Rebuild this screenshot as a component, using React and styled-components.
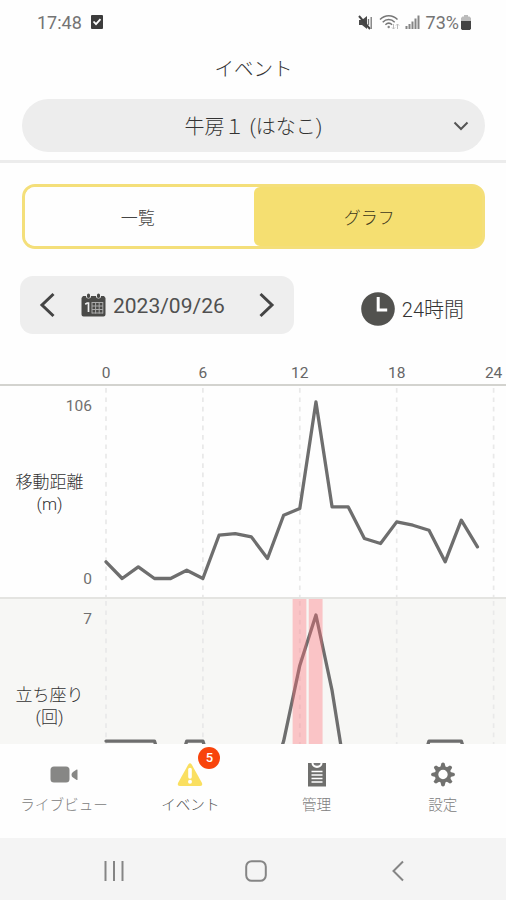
import React from 'react'
import styled, { createGlobalStyle } from 'styled-components'

const GlobalStyle = createGlobalStyle`
  * {
    box-sizing: border-box;
  }
  body {
    margin: 0;
    background: #fefefe;
    font-family: Roboto, 'Noto Sans CJK JP', sans-serif;
    font-weight: 300;
    color: #333;
  }
  svg {
    display: block;
    flex: none;
  }
`

const Screen = styled.div`
  display: flex;
  flex-direction: column;
  width: 506px;
  height: 900px;
  overflow: hidden;
  background: #fefefe;
`

const StatusBar = styled.div`
  display: flex;
  align-items: center;
  height: 44px;
  padding: 0 35px 0 37px;
  font-size: 18px;
  font-weight: 400;
  color: #747474;
`
const StatusLeft = styled.div`
  display: flex;
  align-items: center;
  gap: 9px;
`
const StatusRight = styled.div`
  display: flex;
  align-items: center;
  margin-left: auto;
  gap: 5.5px;
`
const Battery = styled.span`
  display: flex;
  align-items: center;
  gap: 2px;
`

const Header = styled.header`
  height: 119px;
  padding: 0 21px 0 22px;
  border-bottom: 3px solid #ececec;
`
const Title = styled.h1`
  height: 48px;
  margin: 0 0 7px;
  font-size: 19.5px;
  font-weight: inherit;
  line-height: 51px;
  text-align: center;
`
const Select = styled.button`
  display: grid;
  grid-template-columns: 40px 1fr 40px;
  align-items: center;
  width: 100%;
  height: 53px;
  padding: 0;
  border: 0;
  border-radius: 27px;
  background: #ededed;
  font: inherit;
  font-size: 20px;
  color: #333;
`
const SelectLabel = styled.span`
  grid-column: 2;
`
const SelectArrow = styled.span`
  padding-left: 8px;
`

const Tabs = styled.div`
  display: flex;
  height: 65px;
  margin: 21px 21px 0 22px;
  border: 3px solid #f4df7a;
  border-radius: 13px;
  background: linear-gradient(90deg, #fefefe 60%, #f5df71 60%);
`
const Tab = styled.button`
  flex: 1;
  padding: ${({ $active }) => ($active ? '0 0 0 3px' : '0 3px 0 0')};
  border: 0;
  border-radius: ${({ $active }) => ($active ? '6px 10px 10px 6px' : '10px 0 0 10px')};
  background: ${({ $active }) => ($active ? '#f5df71' : '#fefefe')};
  font: inherit;
  font-size: 17px;
  color: ${({ $active }) => ($active ? '#40391c' : '#444')};
`

const Filter = styled.div`
  display: flex;
  align-items: center;
  height: 58px;
  margin: 27px 42px 0 20px;
`
const DatePicker = styled.div`
  display: flex;
  align-items: center;
  width: 274px;
  height: 58px;
  padding: 0 19px;
  border-radius: 13px;
  background: #eee;
`
const DateText = styled.span`
  margin: 2px auto 0 7px;
  font-size: 21px;
  font-weight: 400;
  color: #505050;
`
const Calendar = styled.span`
  margin-left: 26px;
`
const Range = styled.div`
  display: flex;
  align-items: center;
  gap: 7px;
  margin-left: auto;
  padding-top: 8px;
  font-size: 20px;
`
const RangeLabel = styled.span`
  padding-top: 3px;
  line-height: 31px;
`

const Axis = styled.div`
  display: flex;
  align-items: flex-end;
  height: 52px;
  padding: 0 0 2px 57.6px;
  border-bottom: 2px solid #d3d3cf;
  font-size: 15.5px;
  font-weight: 400;
  line-height: 18px;
  color: #666;
`
const Hour = styled.span`
  flex: 0 0 96.9px;
  text-align: center;
`

const Charts = styled.main`
  height: 358px;
  overflow: hidden;
`
const Row = styled.section`
  display: flex;
  height: 213px;
  border-bottom: 2px solid #e4e4e1;
  background: ${({ $shaded }) => ($shaded ? '#f7f7f5' : '#fefefe')};
`
const Legend = styled.div`
  display: flex;
  flex-direction: column;
  justify-content: space-between;
  width: 92px;
  padding: 11px 0 9px 7px;
`
const Bound = styled.span`
  height: 18px;
  font-size: 15.5px;
  font-weight: 400;
  line-height: 18px;
  text-align: right;
  color: #707070;
`
const Metric = styled.span`
  font-size: 17px;
  line-height: 22px;
  text-align: center;
`

const Nav = styled.nav`
  display: flex;
  height: 94px;
  padding: 16px 0 0 1px;
  background: #fefefe;
`
const NavItem = styled.a`
  display: flex;
  flex: 1;
  flex-direction: column;
  align-items: center;
  font-size: 14.6px;
  line-height: 22px;
  color: ${({ $active }) => ($active ? '#555' : '#808080')};
`
const NavIcon = styled.span`
  position: relative;
  height: 33.500px;
`
const Badge = styled.span`
  position: absolute;
  top: -13px;
  left: 21px;
  width: 22px;
  height: 22px;
  border-radius: 50%;
  background: #f8440c;
  font-size: 13px;
  font-weight: 500;
  text-align: center;
  color: #fff;
`

const SystemBar = styled.div`
  display: flex;
  align-items: center;
  height: 62px;
  padding: 3px 0 0 43px;
  background: #f4f4f4;
`
const SystemKey = styled.span`
  display: flex;
  justify-content: center;
  width: 142px;
`

const HOURS = [0, 6, 12, 18, 24]
const STEP = 16.15
const LEFT = 14
const BASE = 192.5
const SPAN = 176.5

const METRICS = [
  {
    name: '移動距離',
    unit: '(m)',
    min: 0,
    max: 106,
    values: [
      10, 0, 7, 0, 0, 5, 0, 26, 27, 25, 12, 38, 42, 106, 43, 43, 24, 21, 34, 32,
      29, 10, 35, 19,
    ],
    alerts: [],
  },
  {
    name: '立ち座り',
    unit: '(回)',
    max: 7,
    values: [
      2, 2, 2, 2, 0, 2, 2, 0, 0, 0, 0, 2, 5, 7, 4, 0, 0, 0, 0, 0, 2, 2, 2, 0,
    ],
    alerts: [12, 13],
  },
]

function Chart({ values, max, alerts }) {
  const points = values
    .map((v, i) => `${LEFT + i * STEP},${BASE - (v / max) * SPAN}`)
    .join(' ')

  return (
    <svg width="414" height="211" viewBox="0 0 414 211">
      {HOURS.map(h => (
        <line
          key={h}
          x1={LEFT + h * STEP}
          x2={LEFT + h * STEP}
          y1="2"
          y2="211"
          stroke="#e9e9e9"
          strokeWidth="1.7"
          strokeDasharray="4.7 4.7"
        />
      ))}
      <polyline
        points={points}
        fill="none"
        stroke="#6e6e6e"
        strokeWidth="3.3"
        strokeLinejoin="round"
        strokeLinecap="round"
      />
      {alerts.map(h => (
        <rect
          key={h}
          x={LEFT + h * STEP - 7.2}
          y="0"
          width="13.8"
          height="211"
          fill="rgba(255, 108, 116, 0.37)"
        />
      ))}
    </svg>
  )
}

function Chevron({ width, height, stroke, color, d }) {
  return (
    <svg width={width} height={height} viewBox={`0 0 ${width} ${height}`}>
      <path d={d} fill="none" stroke={color} strokeWidth={stroke} />
    </svg>
  )
}

function CheckIcon() {
  return (
    <svg width="12" height="14" viewBox="0 0 12 14">
      <rect width="12" height="14" rx="1" fill="#3c3c3c" />
      <path
        d="M2.5 6.5l2.5 2.7 4.5-5"
        fill="none"
        stroke="#fff"
        strokeWidth="1.8"
      />
    </svg>
  )
}

function MuteIcon() {
  return (
    <svg width="15" height="15" viewBox="0 0 15 15">
      <path d="M1 5h3l5-4v13l-5-4H1z" fill="#4a4a4a" />
      <path d="M1 1l11 13" stroke="#444" strokeWidth="2" />
      <path d="M10.5 4v6M13.2 2v12" stroke="#777" strokeWidth="1.3" />
    </svg>
  )
}

function WifiIcon() {
  return (
    <svg width="21" height="16" viewBox="0 0 21 16">
      <g fill="none" stroke="#777" strokeWidth="1.5">
        <path d="M1 5.5c5-5 12.5-5 17.5 0" />
        <path d="M3.7 8.2c3.5-3.5 8.5-3.5 12 0" />
        <path d="M6.4 10.8c2-2 4.7-2 6.7 0" />
      </g>
      <circle cx="9.7" cy="13" r="1.2" fill="#888" />
      <path
        d="M14.5 10v5M13 13.500l1.500 1.500 1.500-1.500M18.500 15v-5M17 11.500l1.500-1.500 1.500 1.500"
        fill="none"
        stroke="#bbb"
      />
    </svg>
  )
}

function SignalIcon() {
  return (
    <svg width="15" height="14" viewBox="0 0 15 14">
      <path
        d="M1.5 14v-3M4.5 14v-5M7.5 14V6.5M10.5 14V3.5M13.5 14V0.5"
        stroke="#858585"
        strokeWidth="2"
      />
    </svg>
  )
}

function BatteryIcon() {
  return (
    <svg width="10" height="15" viewBox="0 0 10 15">
      <path d="M3 0h4v1.5h1.500L10 3v3H0V3l1.500-1.500H3z" fill="#bbb" />
      <path d="M0 6h10v7.500L9 15H1l-1-1.500z" fill="#444" />
    </svg>
  )
}

function CalendarIcon() {
  return (
    <svg width="25" height="24" viewBox="0 0 25 24">
      <path
        d="M2 3h3a2.5 2.5 0 0 0 5 0h5a2.5 2.5 0 0 0 5 0h3l1.500 2v16.500a2 2 0 0 1-2 2h-20a2 2 0 0 1-2-2V5z"
        fill="#4a4a48"
      />
      <rect x="6" y="0.5" width="3" height="4.5" rx="1.5" fill="#4a4a48" />
      <rect x="16" y="0.5" width="3" height="4.5" rx="1.5" fill="#4a4a48" />
      <path d="M4.2 11.2l2-1.200h1.300v9" fill="none" stroke="#eee" strokeWidth="1.7" />
      <path
        d="M11 9.500h11M11 13h11M11 16.500h11M11 20h11M11 9v11.500M14.600 9v11.500M18.200 9v11.500M21.800 9v11.500"
        stroke="#aaa"
        strokeWidth="1"
      />
    </svg>
  )
}

function ClockIcon() {
  return (
    <svg width="34" height="34" viewBox="0 0 34 34">
      <circle cx="17" cy="17" r="16.8" fill="#52524f" />
      <path d="M17.2 5v13h9" fill="none" stroke="#fff" strokeWidth="3" />
    </svg>
  )
}

function CameraIcon() {
  return (
    <svg width="28" height="28" viewBox="0 0 28 28">
      <rect x="0.5" y="6.5" width="19" height="16" rx="3.5" fill="#878785" />
      <path
        d="M27.5 10v9.500q0 .8-.8.4l-3.700-2.300q-1.500-1-1.500-2.900t1.500-2.800l3.700-2.300q.8-.4.8.4z"
        fill="#878785"
      />
    </svg>
  )
}

function WarningIcon() {
  return (
    <svg width="26" height="28" viewBox="0 0 26 28">
      <path
        d="M11.3 4.500q1.700-2.500 3.400 0L25 23q1 3-2 3H3q-3 0-2-3z"
        fill="#fadf60"
      />
      <path d="M13 9.500v7.500" stroke="#fff" strokeWidth="3.6" strokeLinecap="round" />
      <circle cx="13" cy="21.8" r="2" fill="#fff" />
    </svg>
  )
}

function ClipboardIcon() {
  return (
    <svg width="20" height="28" viewBox="0 0 20 28">
      <path d="M1 3h3.500a5.500 5 0 0 0 11 0H19v23.500H1z" fill="#6f6f6d" />
      <path d="M6.500 3h7a3.500 2.800 0 0 1-7 0z" fill="#777" />
      <path
        d="M4.500 11.500h11M4.500 15h11M4.500 18.500h11M4.500 22h11"
        stroke="#fff"
        strokeWidth="1.5"
      />
    </svg>
  )
}

function GearIcon() {
  return (
    <svg width="26" height="28" viewBox="0 0 26 28">
      <g transform="translate(13 14.5)">
        {[0, 45, 90, 135, 180, 225, 270, 315].map(a => (
          <path
            key={a}
            d="M-2.800-6.500L-1.600-11.300q1.600-1.400 3.200 0L2.800-6.500z"
            transform={`rotate(${a})`}
            fill="#71716f"
          />
        ))}
        <circle r="6.500" fill="none" stroke="#71716f" strokeWidth="3.6" />
      </g>
    </svg>
  )
}

const NAV_ITEMS = [
  { label: 'ライブビュー', icon: <CameraIcon /> },
  { label: 'イベント', icon: <WarningIcon />, badge: 5, active: true },
  { label: '管理', icon: <ClipboardIcon /> },
  { label: '設定', icon: <GearIcon /> },
]

function App() {
  return (
    <Screen>
      <GlobalStyle />
      <StatusBar>
        <StatusLeft>
          17:48
          <CheckIcon />
        </StatusLeft>
        <StatusRight>
          <MuteIcon />
          <WifiIcon />
          <SignalIcon />
          <Battery>
            73%
            <BatteryIcon />
          </Battery>
        </StatusRight>
      </StatusBar>

      <Header>
        <Title>イベント</Title>
        <Select>
          <SelectLabel>牛房１ (はなこ)</SelectLabel>
          <SelectArrow>
            <Chevron width={16} height={10} stroke={2} color="#555" d="M1.500 1.500L8 8l6.500-6.500" />
          </SelectArrow>
        </Select>
      </Header>

      <Tabs>
        <Tab>一覧</Tab>
        <Tab $active>グラフ</Tab>
      </Tabs>

      <Filter>
        <DatePicker>
          <Chevron width={16} height={26} stroke={3} color="#444" d="M14.500 2L3 13l11.500 11" />
          <Calendar>
            <CalendarIcon />
          </Calendar>
          <DateText>2023/09/26</DateText>
          <Chevron width={16} height={26} stroke={3} color="#444" d="M1.500 2L13 13 1.500 24" />
        </DatePicker>
        <Range>
          <ClockIcon />
          <RangeLabel>24時間</RangeLabel>
        </Range>
      </Filter>

      <Axis>
        {HOURS.map(h => (
          <Hour key={h}>{h}</Hour>
        ))}
      </Axis>

      <Charts>
        {METRICS.map(({ name, unit, min, max, values, alerts }, i) => (
          <Row key={name} $shaded={i % 2 === 1}>
            <Legend>
              <Bound>{max}</Bound>
              <Metric>
                {name}
                <br />
                {unit}
              </Metric>
              <Bound>{min}</Bound>
            </Legend>
            <Chart values={values} max={max} alerts={alerts} />
          </Row>
        ))}
      </Charts>

      <Nav>
        {NAV_ITEMS.map(({ label, icon, badge, active }) => (
          <NavItem key={label} $active={active}>
            <NavIcon>
              {icon}
              {badge && <Badge>{badge}</Badge>}
            </NavIcon>
            {label}
          </NavItem>
        ))}
      </Nav>

      <SystemBar>
        <SystemKey>
          <svg width="22" height="22" viewBox="0 0 22 22">
            <path d="M2.500 1v20M11 1v20M19.500 1v20" stroke="#858585" strokeWidth="2" />
          </svg>
        </SystemKey>
        <SystemKey>
          <svg width="22" height="22" viewBox="0 0 22 22">
            <rect x="1.200" y="1.200" width="19.600" height="19.600" rx="5.500" fill="none" stroke="#858585" strokeWidth="2" />
          </svg>
        </SystemKey>
        <SystemKey>
          <Chevron width={12} height={22} stroke={2} color="#858585" d="M11 1.500L1.500 11l9.500 9.500" />
        </SystemKey>
      </SystemBar>
    </Screen>
  )
}

export default App
